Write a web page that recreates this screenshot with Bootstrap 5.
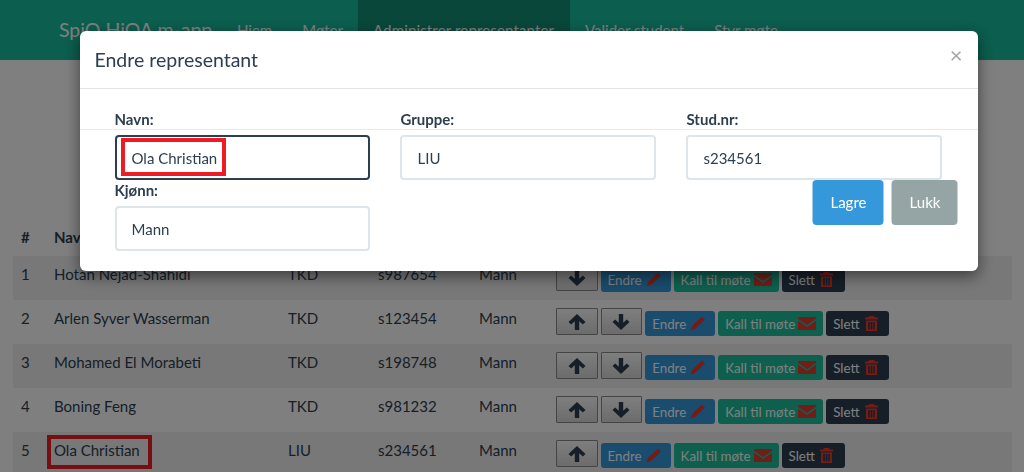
<!DOCTYPE html>
<html lang="no">
<head>
    <meta charset="UTF-8">
    <meta name="viewport" content="width=device-width, initial-scale=1.0">
    <title>SpiO HiOA m-app</title>
    <link href="https://cdn.jsdelivr.net/npm/bootstrap@5.3.2/dist/css/bootstrap.min.css" rel="stylesheet">
    <script src="https://cdn.jsdelivr.net/npm/bootstrap@5.3.2/dist/js/bootstrap.bundle.min.js"></script>
    <style>
        html, body { height: 100%; overflow: hidden; }
        body { font-family: Lato, "Liberation Sans", sans-serif; font-size: 15px; color: #2c3e50; background: #fff; }

        .top-bar { background: #18bc9c; height: 60px; padding: 0 0 0 44px; align-items: stretch; justify-content: flex-start; flex-wrap: nowrap; }
        .top-bar .navbar-brand { color: #fff; font-size: 19.5px; padding: 19px 15px 0; margin: 0; line-height: 21px; width: 178px; }
        .top-bar.navbar-expand .navbar-nav .nav-link { color: #fff; padding: 20px 15px 0; height: 60px; line-height: 21px; }
        .top-bar.navbar-expand .navbar-nav .nav-link.active { color: #fff; background: #128f76; width: 212px; white-space: nowrap; letter-spacing: .15px; }

        .rep-table { table-layout: fixed; width: 999px; margin: 159px 0 0 13px; --bs-table-bg: transparent; --bs-table-striped-bg: #f0f0f0; --bs-table-color: #2c3e50; --bs-table-striped-color: #2c3e50; }
        .rep-table > * > * > * { border: 0; padding: 8px; height: 44px; vertical-align: top; line-height: 21px; }
        .rep-table thead th { height: 36px; }
        .rep-table td.act-cell { padding-top: 8px; padding-bottom: 0; }
        .w-num { width: 33px; } .w-name { width: 234px; } .w-group { width: 90px; } .w-stud { width: 101px; } .w-gender { width: 77px; }

        .mark-box { border: 4px solid #ed1c24; position: absolute; pointer-events: none; }
        .name-cell { position: relative; }
        .name-cell .mark-box { left: 1px; top: 3px; width: 105px; height: 34px; }

        .act-row { display: flex; gap: 3px; align-items: flex-start; }
        .arrow-btn { width: 41.6px; height: 27px; padding: 0; display: flex; align-items: center; justify-content: center; border: 1px solid #8a8a8a; border-radius: 1px; background: linear-gradient(#fdfdfd, #d8d8d8); color: #2c3e50; }
        .arrow-btn svg { width: 18px; height: 16px; fill: #2c3e50; }
        .act-btn { height: 25px; margin-top: 3px; padding: 0 0 0 7px; font-size: 13.33px; line-height: 24px; border: 0; border-radius: 3px; color: #fff; display: flex; align-items: center; gap: 3px; white-space: nowrap; }
        .act-btn svg { width: 17px; height: 15px; fill: #e8392c; }
        .act-edit { background: #3498db; width: 70px; }
        .act-call { background: #1cbf9d; width: 105px; }
        .act-call svg { width: 18px; height: 13px; }
        .act-del { background: #2c3e50; width: 63px; }

        .edit-modal { display: block; }
        .edit-modal .modal-dialog { width: 898px; max-width: 898px; margin: 31px 0 0 79.5px; }
        .edit-modal .modal-content { border-radius: 6px; box-shadow: 0 5px 15px rgba(0,0,0,.5); height: 240px; border: 0; }
        .edit-modal .modal-header { height: 58px; padding: 0 15px; border-bottom: 1px solid #e5e5e5; align-items: center; }
        .edit-modal .modal-title { font-size: 19.5px; font-weight: 400; line-height: 1; }
        .x-btn { background: none; border: 0; padding: 0; margin: -10px 0 0 auto; font-size: 22px; line-height: 1; color: #a5a5a5; }

        .form-area { padding: 20px 20px 0; position: relative; }
        .form-area::before { content: ""; position: absolute; left: 0; right: 0; top: 40px; border-top: 1px solid #e9e9e9; }
        .form-cols { margin: 0; --bs-gutter-x: 30px; position: relative; }
        .form-cols > * { padding-left: 15px; padding-right: 15px; }
        .form-cols label { font-weight: 700; display: block; line-height: 21px; margin-bottom: 5px; height: 21px; }
        .rep-input { height: 45px; border: 2px solid #dce4ec; border-radius: 4px; padding: 10px 15px; font-size: 15px; color: #2c3e50; box-shadow: none; }
        .rep-input.is-on { border-color: #2c3e50; }
        .input-wrap { position: relative; }
        .input-wrap .mark-box { left: 6px; top: 3px; width: 105px; height: 38px; }
        .form-btns { display: flex; justify-content: flex-end; gap: 8px; padding-right: 0 !important; transform: translateX(.5px); }
        .save-btn, .close-btn { height: 45px; border: 0; border-radius: 4px; color: #fff; font-size: 15px; font-weight: 400; padding: 0; }
        .save-btn { width: 71px; background: #3498db; }
        .close-btn { width: 66px; background: #95a5a6; }
    </style>
</head>
<body>

<svg class="d-none">
    <symbol id="i-up" viewBox="0 0 18 16"><path d="M9 0 L17.5 8 L14.8 10.6 L11.2 7.2 V16 H6.8 V7.2 L3.2 10.6 L.5 8 Z"/></symbol>
    <symbol id="i-down" viewBox="0 0 18 16"><path d="M9 16 L17.5 8 L14.8 5.4 L11.2 8.8 V0 H6.8 V8.8 L3.2 5.4 L.5 8 Z"/></symbol>
    <symbol id="i-pen" viewBox="0 0 17 15"><path d="M13 .5 L16 3.4 L6 13 L1.5 14.5 L3 10 Z"/></symbol>
    <symbol id="i-mail" viewBox=".5 2 16 11.5"><path d="M.5 2 H16.5 V3.5 L8.5 9 L.5 3.5 Z M.5 5.4 L8.5 10.9 L16.5 5.4 V13.5 H.5 Z"/></symbol>
    <symbol id="i-trash" viewBox="0 0 17 15"><path d="M6 0 H11 L12 1.5 H15 V3.5 H2 V1.5 H5 Z M3 4.5 H14 V15 H3 Z M5.2 6 V13.5 H6.8 V6 Z M7.7 6 V13.5 H9.3 V6 Z M10.2 6 V13.5 H11.8 V6 Z" fill-rule="evenodd"/></symbol>
</svg>

<nav class="navbar navbar-expand top-bar">
    <a class="navbar-brand" href="#">SpiO HiOA m-app</a>
    <ul class="navbar-nav">
        <li class="nav-item"><a class="nav-link" href="#">Hjem</a></li>
        <li class="nav-item"><a class="nav-link" href="#">Møter</a></li>
        <li class="nav-item"><a class="nav-link active" href="#">Administrer representanter</a></li>
        <li class="nav-item"><a class="nav-link" href="#">Valider student</a></li>
        <li class="nav-item"><a class="nav-link" href="#">Styr møte</a></li>
    </ul>
</nav>

<table class="table table-striped rep-table">
    <thead>
        <tr>
            <th class="w-num">#</th>
            <th class="w-name">Navn</th>
            <th class="w-group">Gruppe</th>
            <th class="w-stud">Stud.nr</th>
            <th class="w-gender">Kjønn</th>
            <th></th>
        </tr>
    </thead>
    <tbody id="repRows"></tbody>
</table>

<div class="modal-backdrop show"></div>
<div class="modal edit-modal">
    <div class="modal-dialog">
        <div class="modal-content">
            <div class="modal-header">
                <h5 class="modal-title">Endre representant</h5>
                <button type="button" class="x-btn" aria-label="Close">×</button>
            </div>
            <form class="form-area">
                <div class="row form-cols">
                    <div class="col-4">
                        <label>Navn:</label>
                        <div class="input-wrap">
                            <input type="text" class="form-control rep-input is-on" value="Ola Christian">
                            <span class="mark-box"></span>
                        </div>
                    </div>
                    <div class="col-4">
                        <label>Gruppe:</label>
                        <input type="text" class="form-control rep-input" value="LIU">
                    </div>
                    <div class="col-4">
                        <label>Stud.nr:</label>
                        <input type="text" class="form-control rep-input" value="s234561">
                    </div>
                </div>
                <div class="row form-cols">
                    <div class="col-4">
                        <label>Kjønn:</label>
                        <input type="text" class="form-control rep-input" value="Mann">
                    </div>
                    <div class="col-8 form-btns">
                        <button type="button" class="save-btn">Lagre</button>
                        <button type="button" class="close-btn">Lukk</button>
                    </div>
                </div>
            </form>
        </div>
    </div>
</div>

<script>
    const reps = [
        ["Hotan Nejad-Shahidi", "TKD", "s987654", "Mann"],
        ["Arlen Syver Wasserman", "TKD", "s123454", "Mann"],
        ["Mohamed El Morabeti", "TKD", "s198748", "Mann"],
        ["Boning Feng", "TKD", "s981232", "Mann"],
        ["Ola Christian", "LIU", "s234561", "Mann"]
    ];

    function icon(name) {
        return `<svg><use href="#i-${name}"></use></svg>`;
    }

    document.getElementById("repRows").innerHTML = reps.map((r, i) => {
        const up = i > 0 ? `<button class="arrow-btn">${icon("up")}</button>` : "";
        const down = i < reps.length - 1 ? `<button class="arrow-btn">${icon("down")}</button>` : "";
        const mark = i === 4 ? `<span class="mark-box"></span>` : "";
        return `<tr>
            <td>${i + 1}</td>
            <td class="name-cell">${r[0]}${mark}</td>
            <td>${r[1]}</td>
            <td>${r[2]}</td>
            <td>${r[3]}</td>
            <td class="act-cell"><div class="act-row">${up}${down}
                <button class="act-btn act-edit">Endre ${icon("pen")}</button>
                <button class="act-btn act-call">Kall til møte ${icon("mail")}</button>
                <button class="act-btn act-del">Slett ${icon("trash")}</button>
            </div></td>
        </tr>`;
    }).join("");
</script>

</body>
</html>
